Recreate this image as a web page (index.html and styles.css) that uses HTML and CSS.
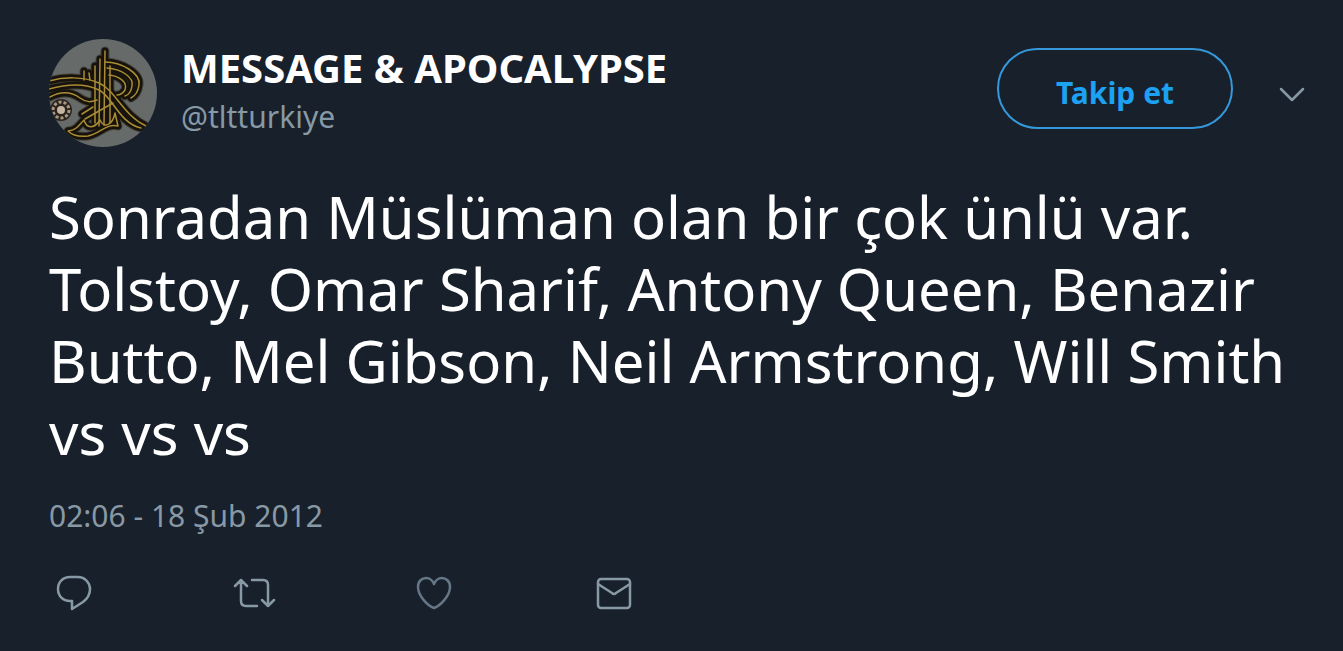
FILE: index.html
```html
<!DOCTYPE html>
<html lang="tr">
<head>
    <meta charset="UTF-8">
    <meta name="viewport" content="width=device-width, initial-scale=1.0">
    <title>MESSAGE &amp; APOCALYPSE</title>
    <link rel="stylesheet" href="styles.css">
</head>
<body>
    <article class="tweet">
        <header class="tweet-header">
            <a href="#" class="account">
                <svg class="avatar" viewBox="0 0 108 108" role="img" aria-label="MESSAGE &amp; APOCALYPSE">
                    <defs>
                        <clipPath id="avatar-clip"><circle cx="54" cy="54" r="54"/></clipPath>
                        <!-- tughra strokes, drawn once dark and once gold -->
                        <g id="tughra">
                            <path d="M46 84V27M50 87L51 20M55 86L56 12M61 84L61 27"/>
                            <path d="M0 42C14 38 34 37 50 44S74 76 97 87"/>
                            <path d="M0 50C18 45 36 44 50 51S70 84 92 89"/>
                            <path d="M1 58C14 51 24 54 31 59S42 63 48 61"/>
                            <path d="M56 23C72 23 92 34 90 46C89 53 86 57 82 59"/>
                            <path d="M58 29C72 30 85 38 83 47C82 54 79 56 76 57"/>
                            <path d="M60 36C70 37 79 43 76 51C74 54 71 56 68 56"/>
                            <path d="M19 92C28 91 30 86 35 81C38 91 46 89 51 81C55 91 64 85 66 74L69 87C57 84 51 95 39 97C31 98 24 97 19 92"/>
                            <path d="M35 32V41M40 34L41 41M33 75L44 68M36 80L64 64"/>
                        </g>
                    </defs>
                    <g clip-path="url(#avatar-clip)">
                        <rect width="108" height="108" fill="#666a69"/>
                        <use href="#tughra" class="ink-shadow"/>
                        <use href="#tughra" class="ink-dark"/>
                        <use href="#tughra" class="ink-gold"/>
                        <circle cx="12" cy="71" r="11" fill="#2b241d"/>
                        <circle cx="12" cy="71" r="8" class="rosette"/>
                        <circle cx="12" cy="71" r="4" fill="#c5b5a0"/>
                    </g>
                </svg>
                <span class="names">
                    <strong class="full-name">MESSAGE &amp; APOCALYPSE</strong>
                    <span class="username">@tltturkiye</span>
                </span>
            </a>
            <div class="header-actions">
                <button type="button" class="follow-btn">Takip et</button>
                <button type="button" class="icon-btn more-btn" aria-label="Daha fazla">
                    <svg width="26" height="16" viewBox="0 0 26 16"><path d="M2 2L13 13L24 2"/></svg>
                </button>
            </div>
        </header>

        <p class="tweet-text">Sonradan Müslüman olan bir çok ünlü var.<br>
            Tolstoy, Omar Sharif, Antony Queen, Benazir<br>
            Butto, Mel Gibson, Neil Armstrong, Will Smith<br>
            vs vs vs</p>

        <time class="tweet-date" datetime="2012-02-18T02:06">02:06 - 18 Şub 2012</time>

        <!-- Reply, retweet, like, message -->
        <footer class="tweet-actions">
            <button type="button" class="icon-btn" aria-label="Yanıtla">
                <svg width="48" height="36" viewBox="0 0 48 36"><path d="M20 2H28C35 2 40 8 40 14C40 20 37 24 33 27L22 34V26H20C13 26 8 21 8 14S13 2 20 2Z"/></svg>
            </button>
            <button type="button" class="icon-btn" aria-label="Retweetle">
                <svg width="48" height="36" viewBox="0 0 48 36"><path d="M5 11L11 5L17 11M11 5V26Q11 31 16 31H27M22 5H33Q38 5 38 10V31M32 25L38 31L44 25"/></svg>
            </button>
            <button type="button" class="icon-btn like-btn" aria-label="Beğen">
                <svg width="48" height="36" viewBox="0 0 48 36"><path d="M24 33C18 31 8 21 8 12C8 6 12 3 16 3C20 3 23 6 24 9C25 6 28 3 32 3C36 3 40 6 40 12C40 21 30 31 24 33Z"/></svg>
            </button>
            <button type="button" class="icon-btn" aria-label="Mesaj">
                <svg width="48" height="36" viewBox="0 0 48 36"><rect x="8" y="4" width="32" height="29" rx="3"/><path d="M8 9L22 18Q24 20 26 18L40 9"/></svg>
            </button>
        </footer>
    </article>
</body>
</html>
```

FILE: styles.css
```css
* {
    box-sizing: border-box;
}

body {
    margin: 0;
    background-color: #18202b;
    color: #fff;
    font-family: "Noto Sans", "Open Sans", sans-serif;
}

.tweet {
    padding: 39px 38px 20px 49px;
}

.tweet-header {
    display: flex;
    justify-content: space-between;
    align-items: flex-start;
}

.account {
    display: flex;
    gap: 24px;
    color: inherit;
    text-decoration: none;
}

.avatar {
    width: 108px;
    height: 108px;
    flex: none;
}

.avatar use {
    fill: none;
    stroke-linecap: round;
    stroke-linejoin: round;
}

.ink-shadow {
    stroke: #48483f;
    stroke-width: 9px;
}

.ink-dark {
    stroke: #17130c;
    stroke-width: 7px;
}

.ink-gold {
    stroke: #a98d35;
    stroke-width: 1.5px;
}

.rosette {
    fill: none;
    stroke: #a89782;
    stroke-width: 3px;
    stroke-dasharray: 3 2;
}

.names {
    display: flex;
    flex-direction: column;
    padding-top: 5px;
}

.full-name {
    font-size: 40px;
    line-height: 48px;
    font-weight: 700;
}

.username,
.tweet-date {
    color: #8899a6;
    font-size: 30px;
    line-height: 50px;
}

.header-actions {
    display: flex;
    align-items: center;
    gap: 46px;
    padding-top: 9px;
}

.follow-btn {
    width: 236px;
    height: 81px;
    padding: 8px 0 0;
    border: 2px solid #3598db;
    border-radius: 41px;
    background: transparent;
    color: #1da1f2;
    font-family: inherit;
    font-size: 30px;
    font-weight: 700;
    cursor: pointer;
}

.icon-btn {
    display: flex;
    padding: 0;
    border: 0;
    background: transparent;
    color: #8899a6;
    cursor: pointer;
}

.icon-btn svg {
    fill: none;
    stroke: currentColor;
    stroke-width: 2.5px;
    stroke-linecap: round;
    stroke-linejoin: round;
}

.more-btn {
    padding-top: 12px;
}

.like-btn {
    color: #657786;
}

.tweet-text {
    margin: 34px 0 22px;
    font-size: 58px;
    line-height: 72px;
}

.tweet-date {
    display: block;
}

.tweet-actions {
    display: flex;
    gap: 132px;
    margin-top: 34px;
    padding-left: 1px;
}
```
